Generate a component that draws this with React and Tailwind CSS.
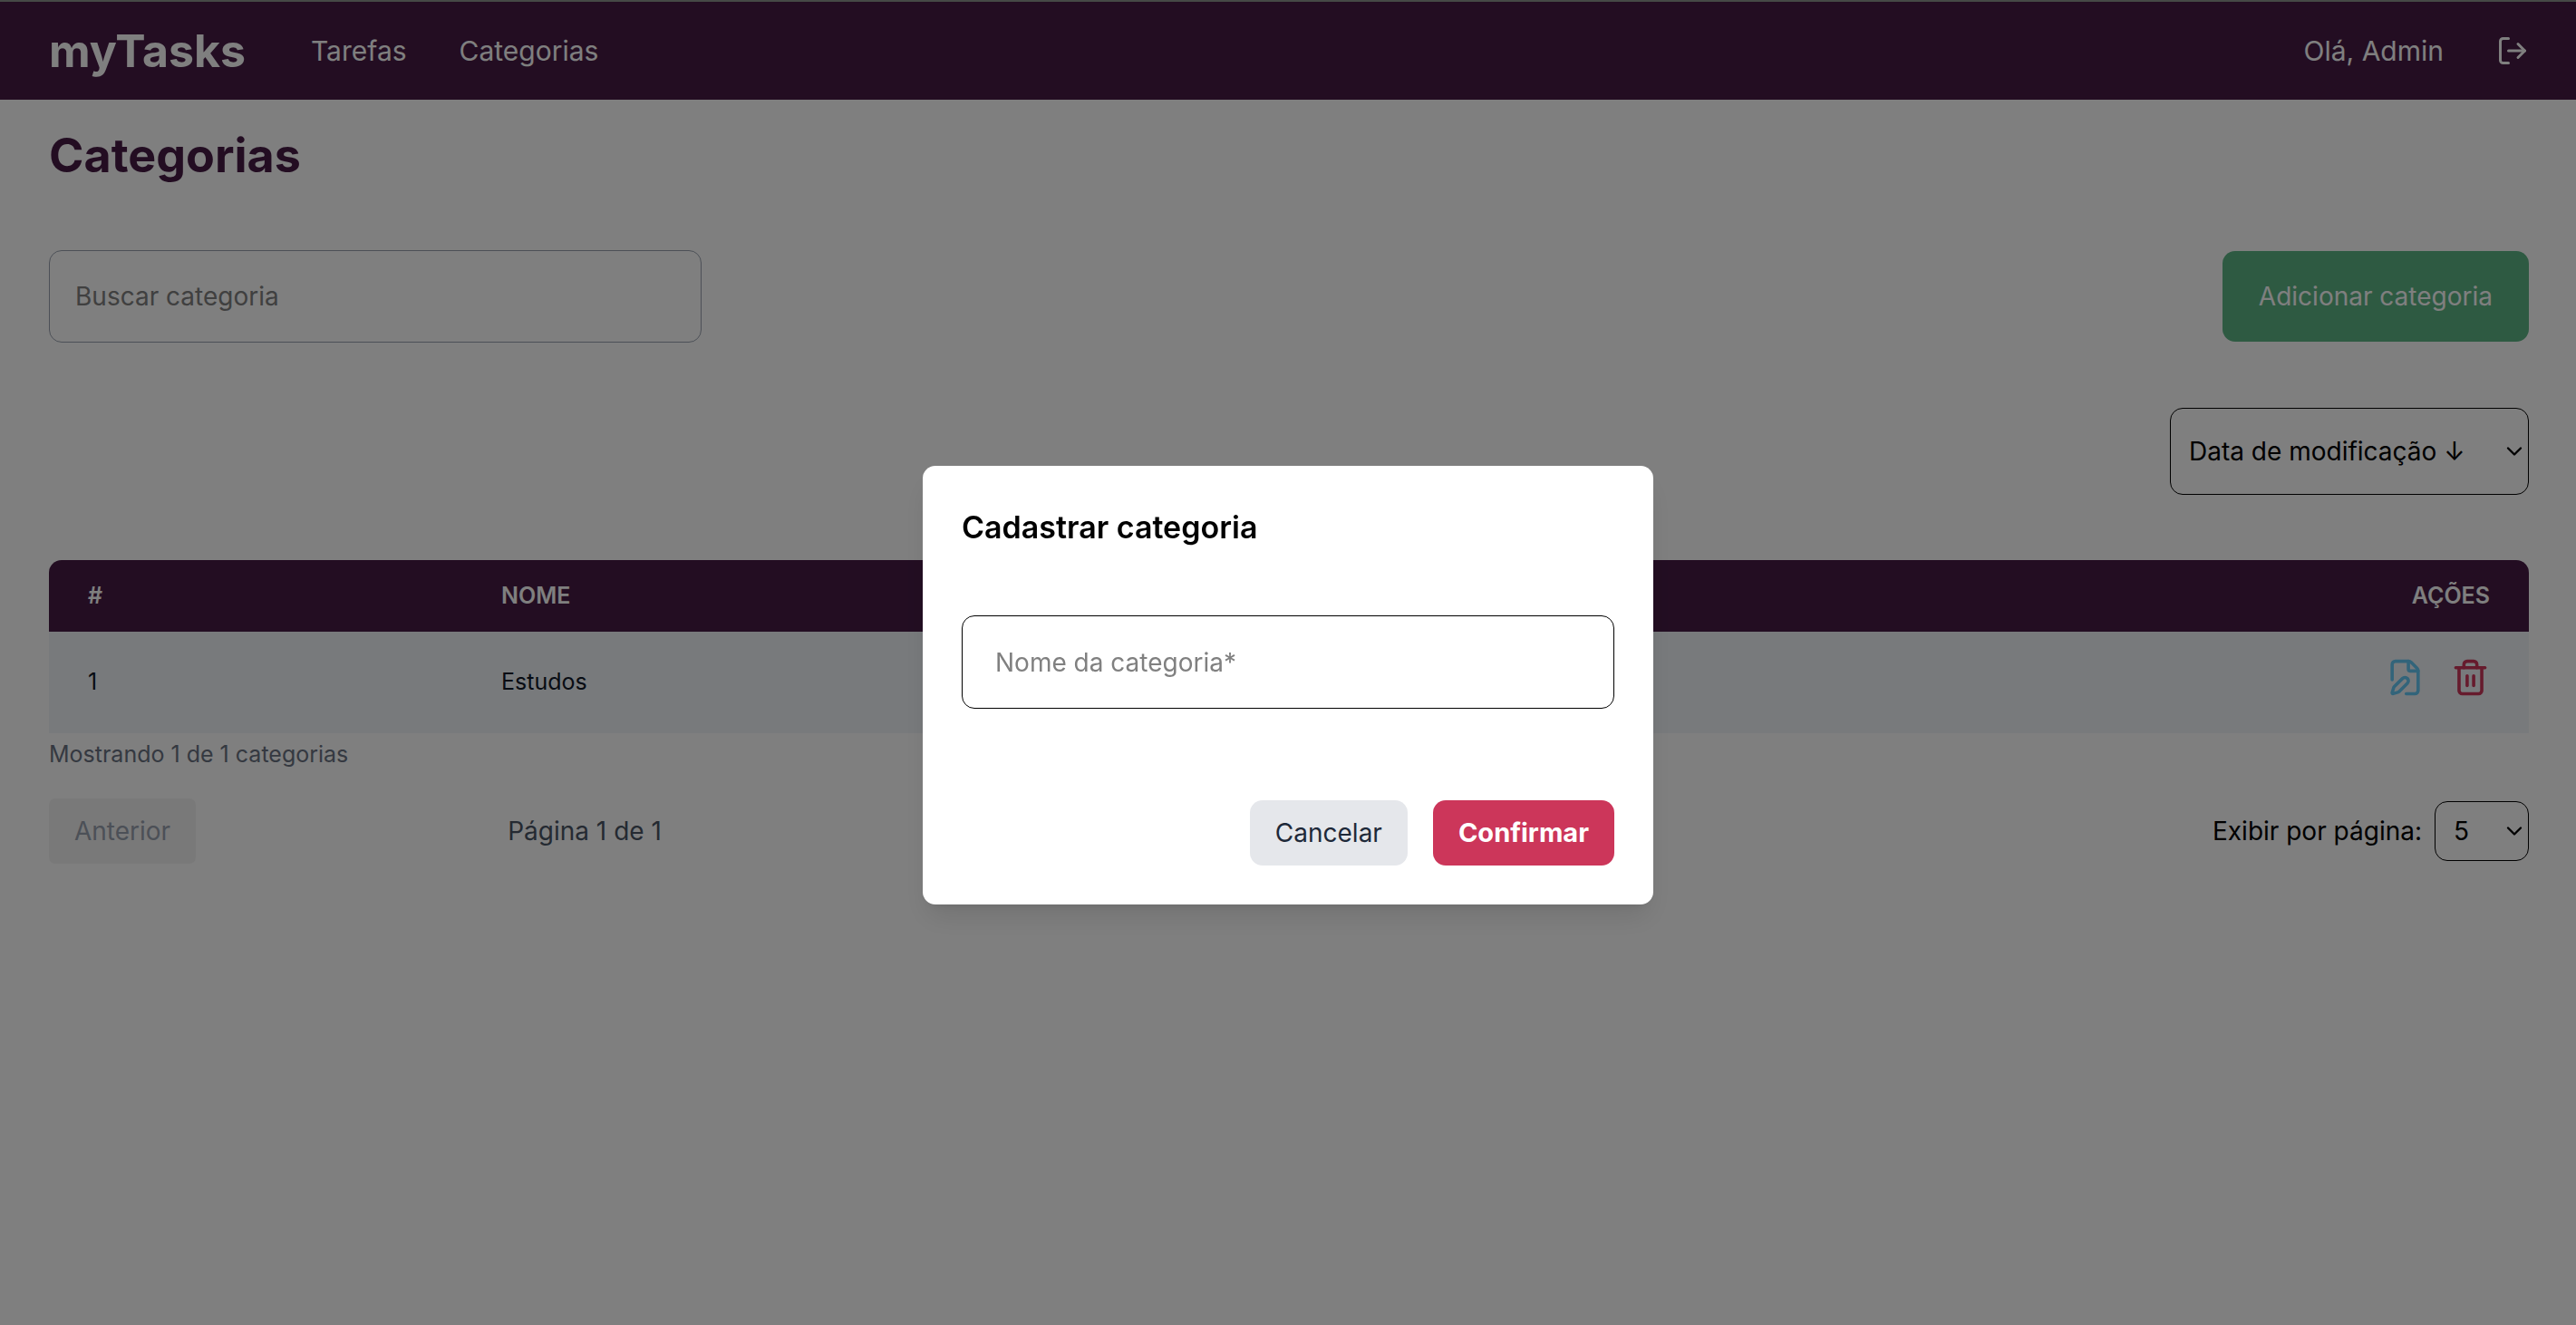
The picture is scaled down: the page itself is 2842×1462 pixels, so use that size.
import React from "react";
import { ChevronDown, FilePen, LogOut, Trash2 } from "lucide-react";

const categories = [{ id: 1, name: "Estudos" }];

function Header() {
  return (
    <header className="flex h-[110px] items-center justify-between border-t-2 border-[#8a928c] bg-[#461b45] pr-[52px] pl-[54px] text-white">
      <div className="flex items-center gap-[72px]">
        <a href="#inicio" className="text-[50px] leading-[72px] font-bold">
          myTasks
        </a>
        <nav className="flex gap-[58px] text-[30px]">
          <a href="#tarefas">Tarefas</a>
          <a href="#categorias">Categorias</a>
        </nav>
      </div>
      <div className="flex items-center gap-[58px] text-[30px]">
        <span>Olá, Admin</span>
        <button type="button" aria-label="Sair">
          <LogOut size={36} />
        </button>
      </div>
    </header>
  );
}

function Select({ className, children, ...props }) {
  return (
    <span className="relative flex">
      <select
        className={`appearance-none rounded-[14px] border border-black bg-transparent pl-5 text-black ${className}`}
        {...props}
      >
        {children}
      </select>
      <ChevronDown
        size={28}
        className="pointer-events-none absolute top-1/2 right-0.5 -translate-y-1/2"
      />
    </span>
  );
}

function CategoryTable() {
  return (
    <table className="mt-[72px] w-full table-fixed text-left text-[25px]">
      <thead>
        <tr className="h-[79px] bg-[#461b45] text-white uppercase">
          <th className="w-1/6 rounded-tl-[14px] px-[43px] font-semibold">#</th>
          <th className="px-[43px] font-semibold">Nome</th>
          <th className="w-1/6 rounded-tr-[14px] px-[43px] text-right font-semibold">
            Ações
          </th>
        </tr>
      </thead>
      <tbody>
        {categories.map((category) => (
          <tr key={category.id} className="h-28 bg-slate-100 text-gray-900">
            <td className="px-[43px]">{category.id}</td>
            <td className="px-[43px]">{category.name}</td>
            <td className="px-[43px]">
              <div className="flex justify-end gap-[29px] pb-3">
                <button type="button" aria-label="Editar" className="text-[#64c8f5]">
                  <FilePen size={43} />
                </button>
                <button type="button" aria-label="Excluir" className="text-[#cc365a]">
                  <Trash2 size={43} />
                </button>
              </div>
            </td>
          </tr>
        ))}
      </tbody>
    </table>
  );
}

function Pagination() {
  return (
    <div className="mt-[26px] flex items-center justify-between">
      <div className="flex items-center gap-[344px]">
        <button
          type="button"
          disabled
          className="h-[72px] rounded-[7px] bg-[#f3f3f3] px-7 text-gray-400"
        >
          Anterior
        </button>
        <span className="text-gray-600">Página 1 de 1</span>
      </div>
      <label className="flex items-center gap-3.5">
        Exibir por página:
        <Select className="h-[66px] w-[104px]" defaultValue="5">
          <option value="5">5</option>
          <option value="10">10</option>
        </Select>
      </label>
    </div>
  );
}

function CategoryDialog() {
  return (
    <div className="fixed inset-0 flex items-center justify-center bg-black/50 pt-[50px]">
      <form
        role="dialog"
        aria-labelledby="dialog-title"
        className="w-[806px] rounded-[14px] bg-white p-[43px] shadow-[0_18px_30px_-5px_rgba(0,0,0,0.1),0_7px_12px_-7px_rgba(0,0,0,0.1)]"
      >
        <h2 id="dialog-title" className="text-[34px] leading-[50px] font-semibold">
          Cadastrar categoria
        </h2>
        <input
          type="text"
          aria-label="Nome da categoria"
          placeholder="Nome da categoria*"
          className="mt-[72px] block h-[103px] w-full rounded-[14px] border border-black px-9 placeholder:text-[#808080]"
        />
        <div className="mt-[101px] flex justify-end gap-7">
          <button
            type="button"
            className="h-[72px] rounded-[14px] bg-gray-200 px-7 text-gray-800"
          >
            Cancelar
          </button>
          <button
            type="submit"
            className="h-[72px] rounded-[14px] bg-[#cc365a] px-7 text-[29px] font-bold text-white"
          >
            Confirmar
          </button>
        </div>
      </form>
    </div>
  );
}

export default function App() {
  return (
    <div className="min-h-screen bg-white font-['Inter',sans-serif] text-[28px] text-black">
      <Header />
      <main className="pt-[26px] pr-[52px] pl-[54px]">
        <h1 className="text-[52px] leading-[72px] font-bold text-[#461b45]">
          Categorias
        </h1>
        <div className="mt-[68px] flex items-center justify-between">
          <input
            type="search"
            aria-label="Buscar categoria"
            placeholder="Buscar categoria"
            className="h-[102px] w-[720px] rounded-[14px] border border-gray-400 px-7 placeholder:text-[#808080]"
          />
          <button
            type="button"
            className="h-[100px] rounded-[14px] bg-[#5cb485] px-10 text-white"
          >
            Adicionar categoria
          </button>
        </div>
        <div className="mt-[72px] flex justify-end">
          <Select
            className="h-24 w-[396px]"
            aria-label="Ordenar por"
            defaultValue="desc"
          >
            <option value="desc">Data de modificação ↓</option>
            <option value="asc">Data de modificação ↑</option>
          </Select>
        </div>
        <CategoryTable />
        <p className="text-[25px] leading-[46px] text-gray-500">
          Mostrando 1 de 1 categorias
        </p>
        <Pagination />
      </main>
      <CategoryDialog />
    </div>
  );
}
